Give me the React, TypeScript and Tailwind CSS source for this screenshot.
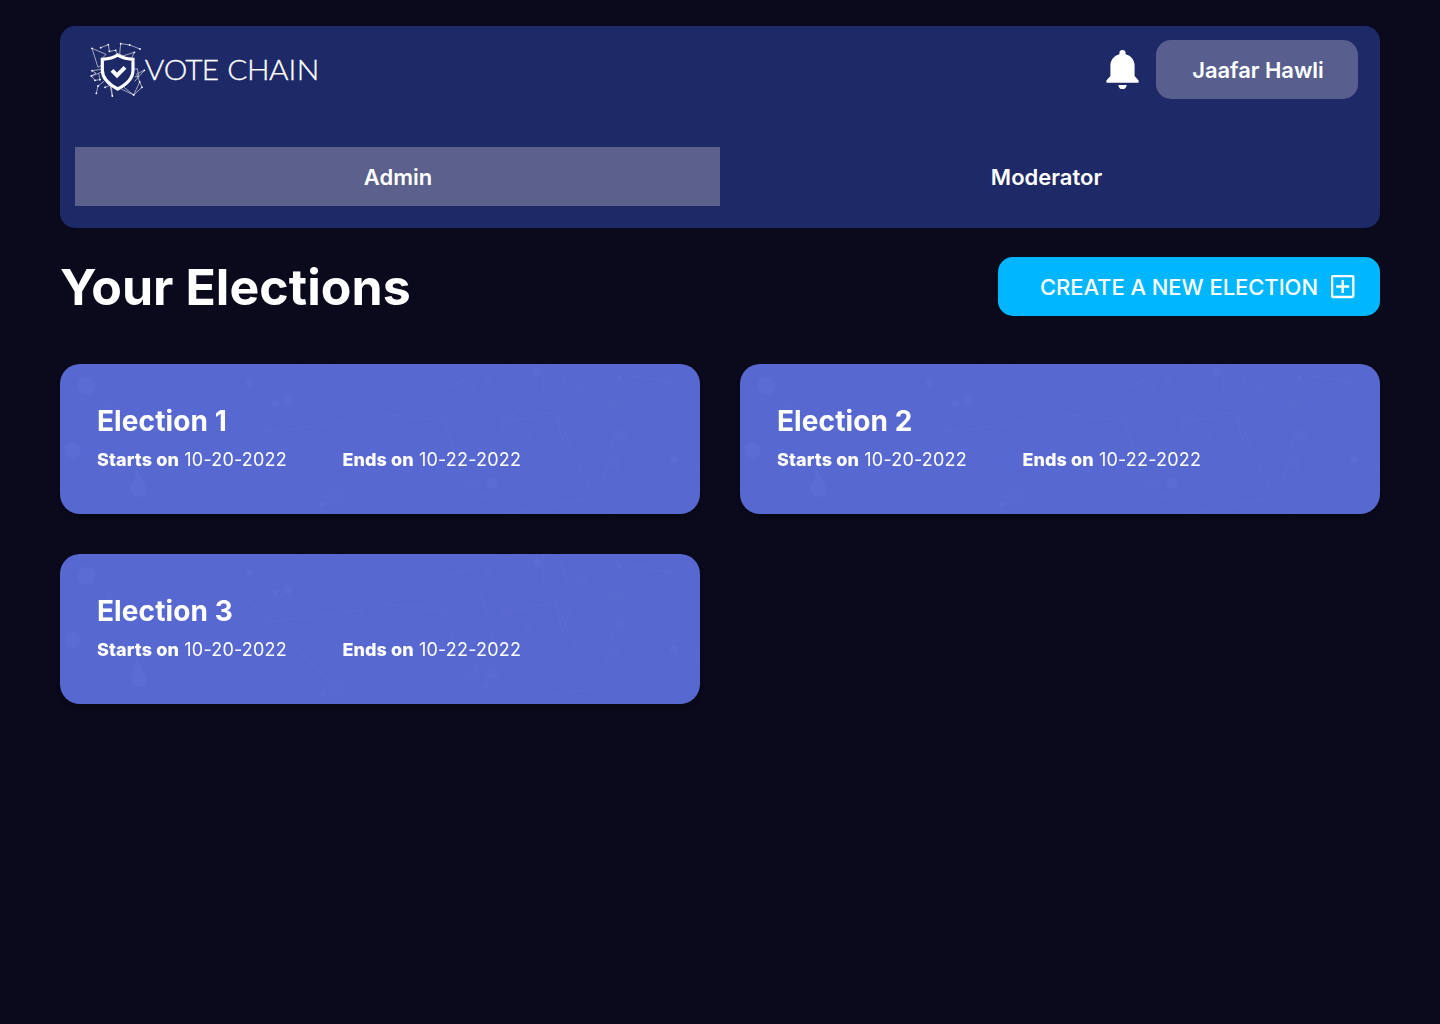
import React from "react";

const NODES: [number, number][] = [
  [24, 37], [50, 35], [73, 26], [76, 46], [95, 43], [110, 23], [137, 27], [168, 39], [151, 49],
  [22, 120], [33, 133], [48, 131], [24, 104], [42, 150], [37, 172], [63, 154], [85, 180],
  [149, 177], [174, 154], [181, 103], [167, 138],
];

function LogoMark() {
  return (
    <svg width="70" height="66" viewBox="0 0 210 198" fill="none" className="block shrink-0">
      <g stroke="white" strokeWidth="2.2" strokeLinejoin="round" opacity="0.8">
        <path d="M24 37L66 55L54 68M24 37L42 94L52 88M50 35L73 26L76 46L95 43L99 54" />
        <path d="M110 23L137 27L168 39M110 23L107 54M116 60L151 49L143 66M107 54L122 62" />
        <path d="M52 100L24 104L36 112L22 120L33 133L48 131L44 112L52 108M22 120L44 112M37 172L42 150L60 136M63 154L78 148L85 180L82 152" />
        <path d="M112 159L149 177L167 138L174 154M167 138L158 114L181 103L152 136M149 177L174 154M152 100L160 98L164 122L152 122M120 154L149 177" />
      </g>
      {NODES.map(([x, y], i) => (
        <circle key={i} cx={x} cy={y} r="2.7" fill="white" />
      ))}
      <path
        d="M101 57C88 66 71 69 55 70V103C55 130 76 146 101 159C127 146 147 130 147 103V70C131 69 114 66 101 57Z"
        fill="#1d2967"
        stroke="white"
        strokeWidth="9.5"
      />
      <path d="M84 103L99 118L123 94" stroke="white" strokeWidth="12" />
    </svg>
  );
}

function Wordmark() {
  return (
    <svg
      width="180"
      height="46"
      viewBox="0 0 180 46"
      className="-ml-[11px] block"
      fill="white"
      stroke="white"
      strokeWidth="0.3"
    >
      <text
        y="33.6"
        x="1.7 19 38.7 54 70 77.4 95.4 115.5 133.4 141"
        fontSize="27.4"
        fontWeight="300"
        fontFamily="Lato, sans-serif"
        transform="scale(1.09 1)"
      >
        VOTE CHAIN
      </text>
    </svg>
  );
}

function Bell() {
  return (
    <svg width="33" height="39" viewBox="0 0 33 39" fill="white" className="block">
      <path d="M16.5 0a3.1 3.1 0 0 0-3.1 3.1v1.1C8 5.6 4.4 10 4.4 15.6V26L.4 30.4v2.4h32.2v-2.4L28.6 26V15.6C28.6 10 25 5.6 19.6 4.2V3.1A3.1 3.1 0 0 0 16.5 0Z" />
      <path d="M12.3 35h8.4a4.2 4.2 0 0 1-8.4 0Z" />
    </svg>
  );
}

function PlusBox() {
  return (
    <svg width="24" height="24" viewBox="0 0 24 24" fill="none" stroke="white" className="block">
      <rect x="1.1" y="1" width="21.2" height="21" rx="1.2" strokeWidth="2.3" />
      <path d="M11.7 5v13M5.2 11.5h13" strokeWidth="2.4" />
    </svg>
  );
}

function Pattern() {
  return (
    <svg viewBox="0 0 640 150" className="absolute inset-0 h-full w-full" fill="none">
      <g fill="#6071d8" opacity="0.55">
        <circle cx="26.5" cy="21.5" r="9" />
        <circle cx="12.5" cy="86" r="8" />
        <path d="M77 104l6 14c6 7 4 15-4 15s-11-7-6-15Z" />
        <circle cx="49" cy="42" r="4" opacity="0.5" />
        <circle cx="178" cy="35" r="9" opacity="0.3" />
        <circle cx="189" cy="19" r="3" />
        <circle cx="215" cy="39" r="3.5" />
        <circle cx="228" cy="36" r="4" />
        <circle cx="208" cy="68" r="6" opacity="0.3" />
        <circle cx="277" cy="134" r="10" opacity="0.4" />
        <circle cx="263" cy="140" r="3" />
        <circle cx="303" cy="48" r="10" opacity="0.2" />
        <circle cx="477" cy="8" r="4" />
        <circle cx="428" cy="17" r="2.5" opacity="0.7" />
        <circle cx="522" cy="27" r="7" opacity="0.4" />
        <circle cx="556" cy="43" r="8" opacity="0.25" />
        <circle cx="559" cy="13" r="2.5" />
        <circle cx="445" cy="58" r="7" opacity="0.25" />
        <circle cx="468" cy="75" r="3" opacity="0.6" />
        <circle cx="502" cy="78" r="8" opacity="0.3" />
        <circle cx="560" cy="71" r="6" opacity="0.5" />
        <circle cx="556" cy="100" r="4" opacity="0.7" />
        <circle cx="614" cy="95" r="4" />
        <circle cx="637" cy="103" r="3" opacity="0.6" />
        <circle cx="412" cy="120" r="8" opacity="0.4" />
        <circle cx="432" cy="119" r="6" opacity="0.8" />
        <circle cx="425" cy="132" r="3.5" opacity="0.7" />
        <circle cx="545" cy="118" r="9" opacity="0.3" />
      </g>
      <g stroke="#6474da" strokeWidth="1.3" opacity="0.28">
        <path d="M184 42L208 68L242 0M208 68L303 56L277 134L208 68M273 0L303 48M277 134L320 105" />
        <path d="M320 44L410 14L450 2M410 14L428 62M378 28L410 14M320 50L385 56L403 35M385 56L435 82M385 56L400 110" />
        <path d="M445 58L471 35M483 0V30M445 58L496 48M540 40L612 18L572 12M496 48L502 78L516 42M498 0L508 30M445 58L412 120M496 50L512 85L530 125L550 150M554 55L550 98L540 120M445 150L530 135" />
      </g>
    </svg>
  );
}

function ElectionCard({ title, start, end }: { title: string; start: string; end: string }) {
  return (
    <article className="relative h-[150px] overflow-hidden rounded-[20px] bg-[#5769d0] shadow-[0_4px_4px_rgba(0,0,0,0.25)]">
      <Pattern />
      <div className="relative px-[37px] pt-[40px]">
        <h2 className="text-[28px] leading-[34px] font-bold tracking-[0.1px]">{title}</h2>
        <div className="mt-[11px] flex text-[18px] leading-[22px] tracking-[0.2px]">
          <p className="w-[245.5px]">
            <span className="font-extrabold tracking-[0.12px]">Starts on</span> {start}
          </p>
          <p>
            <span className="font-extrabold tracking-[0.06px]">Ends on</span> {end}
          </p>
        </div>
      </div>
    </article>
  );
}

const ELECTIONS = ["Election 1", "Election 2", "Election 3"];

export default function App() {
  return (
    <div className="min-h-[1024px] bg-[#0a0a1c] px-[60px] pt-[26px] font-['Inter',sans-serif] text-white">
      <header className="h-[202px] rounded-[15px] bg-[#1e2967]">
        <div className="flex h-[121px] items-start justify-between pr-[22px] pl-[24px]">
          <div className="flex items-center pt-[10px]">
            <LogoMark />
            <Wordmark />
          </div>
          <div className="flex items-center gap-[17px] pt-[14px]">
            <Bell />
            <button className="h-[59px] w-[202px] rounded-[15px] bg-[#585f8e] pt-[2px] pl-[2px] text-[22px] font-semibold tracking-[-0.05px]">
              Jaafar Hawli
            </button>
          </div>
        </div>
        <nav className="flex px-[15px] text-[22px] font-semibold">
          <button className="h-[59px] w-[645px] bg-[#5b618c] pt-[2px] pl-[1px]">Admin</button>
          <button className="h-[59px] flex-1 pt-[2px] pl-[8px]">Moderator</button>
        </nav>
      </header>

      <div className="mt-[29px] flex h-[59px] items-center justify-between">
        <h1 className="text-[50px] leading-[60px] font-bold tracking-[0.07px]">Your Elections</h1>
        <button className="flex h-[59px] w-[382px] items-center justify-end gap-[13px] rounded-[15px] bg-[#00b7ff] pr-[25px] text-[22px] font-[550] tracking-[-0.05px]">
          <span className="pt-[2px]">CREATE A NEW ELECTION</span>
          <PlusBox />
        </button>
      </div>

      <main className="mt-[48px] grid grid-cols-2 gap-[40px]">
        {ELECTIONS.map((title) => (
          <ElectionCard key={title} title={title} start="10-20-2022" end="10-22-2022" />
        ))}
      </main>
    </div>
  );
}
